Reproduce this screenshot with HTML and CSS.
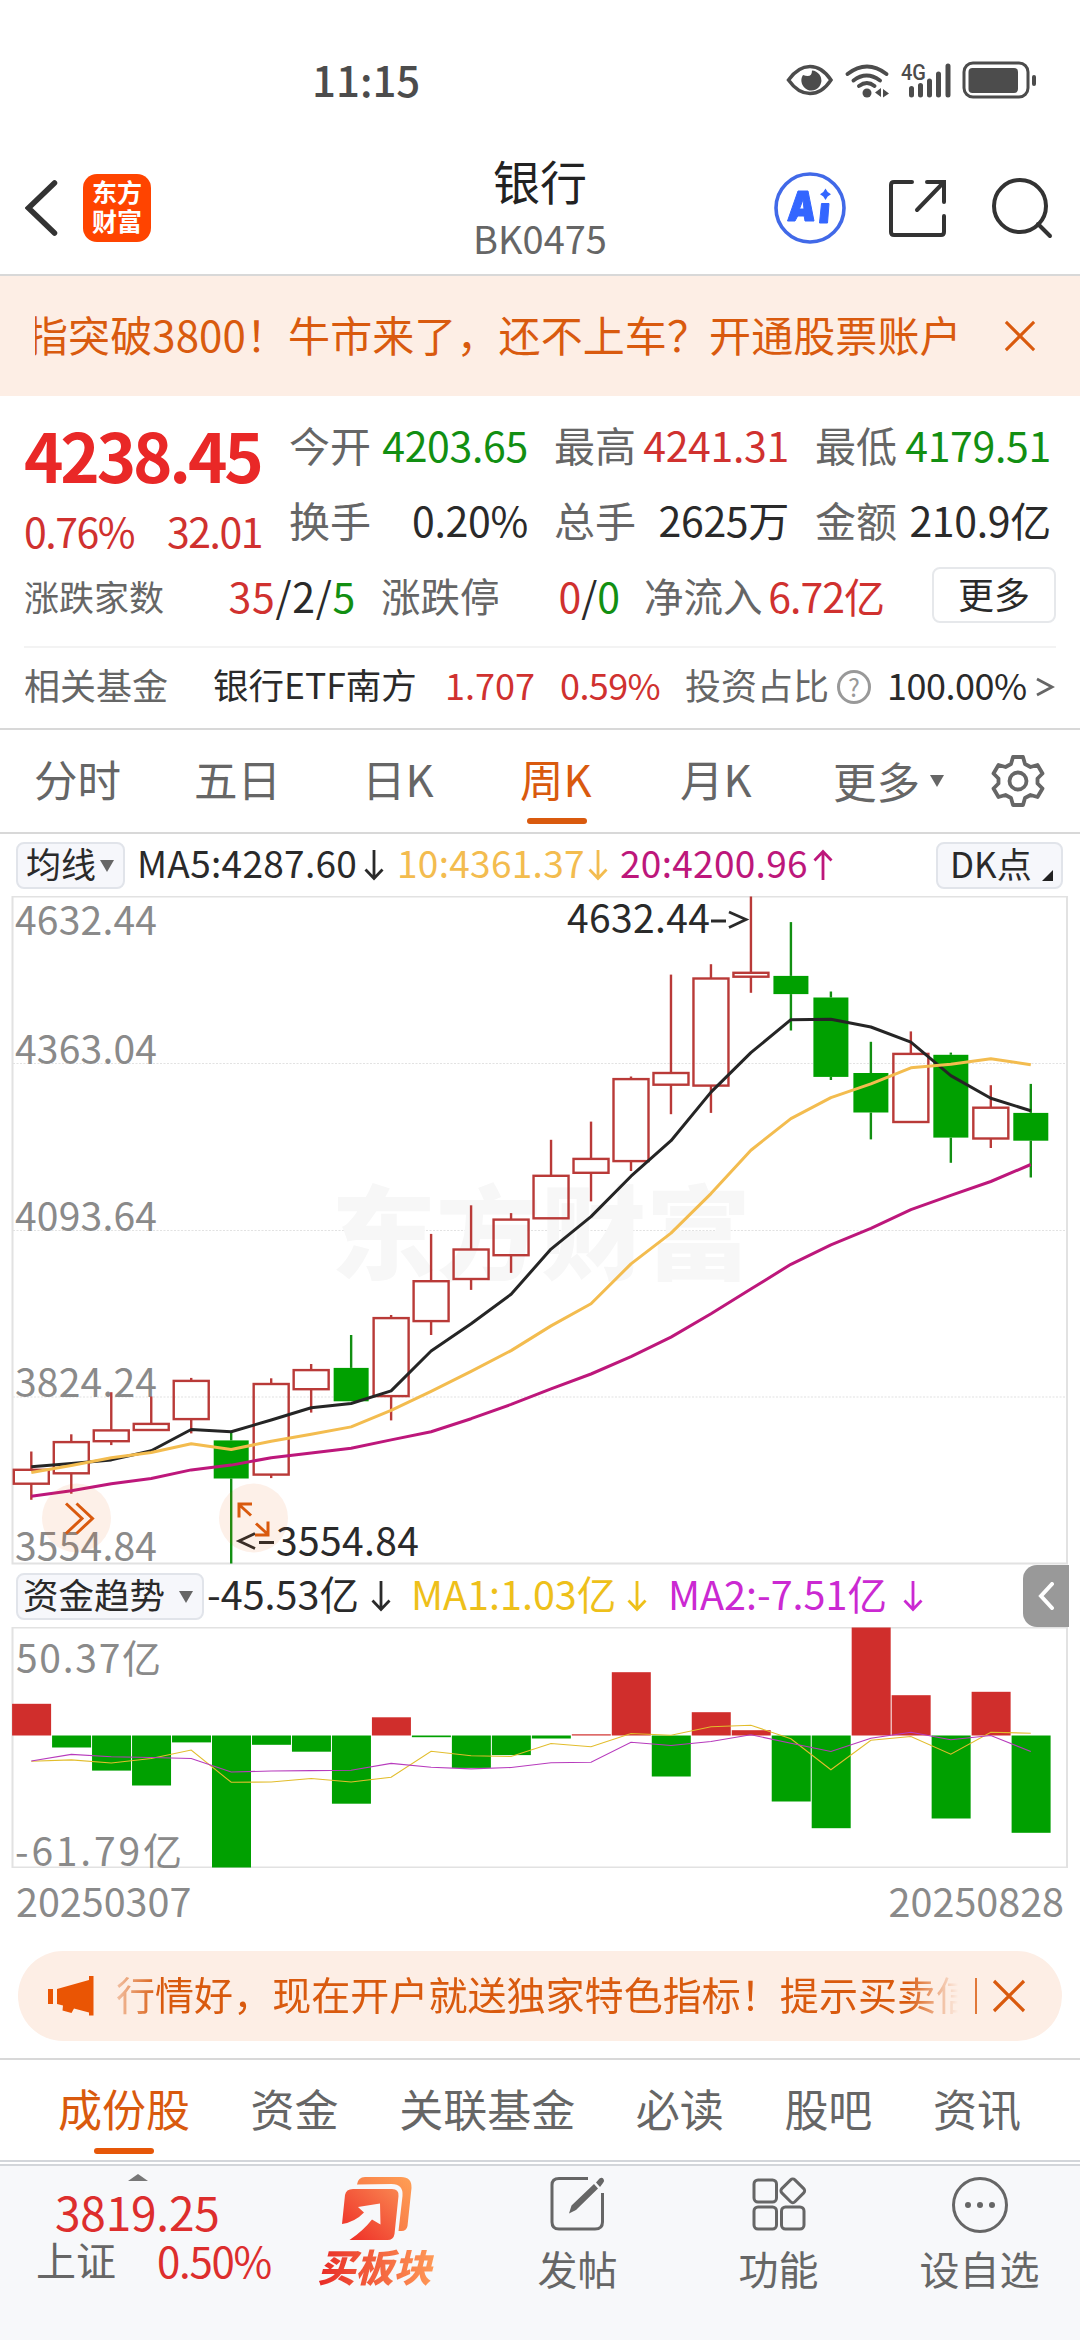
FILE: index.html
```html
<!DOCTYPE html>
<html lang="zh-CN">
<head>
  <meta charset="UTF-8" />
  <meta name="viewport" content="width=device-width, initial-scale=1.0"/>
  <title>银行 BK0475</title>
  <link rel="stylesheet" href="styles.css">
</head>
<body>

  <svg class="defs" width="0" height="0">
    <symbol id="arrow-down" viewBox="0 0 20 32">
      <path d="M10 1v28M1.500 20.500L10 29.500l8.500-9" fill="none" stroke="currentColor" stroke-width="2.800"/>
    </symbol>
    <symbol id="arrow-up" viewBox="0 0 20 32">
      <path d="M10 31V3M1.500 11.500L10 2.500l8.500 9" fill="none" stroke="currentColor" stroke-width="2.800"/>
    </symbol>
    <symbol id="close" viewBox="0 0 34 34">
      <path d="M2 2l30 30M32 2L2 32" fill="none" stroke="currentColor" stroke-width="3.200"/>
    </symbol>
  </svg>

  <div class="status-bar">
    <span class="clock">11:15</span>
    <svg class="status-icons" width="254" height="40" viewBox="786 60 254 40">
      <g fill="none" stroke="#4c4c4c">
        <path d="M788.500 80Q798 66.500 810 66.500T831 80Q822 93.500 810 93.500T788.500 80z" stroke-width="3.500"/>
        <path d="M847.500 74q19.500-15 39 0M853.500 80.500q13-10 26.500 0M859 86q8-6 15.500 0" stroke-width="3.800" stroke-linecap="round"/>
        <path d="M911.500 88.500v6.500M920.500 85.500v9.500M929.500 81v14M938.500 74v21M948 66v29" stroke-width="5" stroke-linecap="round"/>
        <rect x="964" y="63" width="64" height="34" rx="9" stroke-width="3"/>
      </g>
      <g fill="#4c4c4c">
        <path d="M803 75a10 10 0 1 0 9-4.500q0 8-9 4.500z"/>
        <circle cx="867" cy="93" r="4.500"/>
        <path d="M881 88v9l-6-4.500zM883 89l6 4.500-6 4z"/>
        <rect x="968.500" y="68" width="49.500" height="25" rx="4"/>
        <rect x="1032" y="75" width="4" height="11" rx="2"/>
        <text x="901" y="80" class="net-label" textLength="25" lengthAdjust="spacingAndGlyphs">4G</text>
      </g>
    </svg>
  </div>

  <header>
    <div class="header-left">
      <svg width="34" height="58" viewBox="0 0 34 58">
        <path d="M29.500 4L3.500 29l26 25" fill="none" stroke="#333" stroke-width="5.500" stroke-linecap="round"/>
      </svg>
      <div class="brand">东方<br>财富</div>
    </div>
    <div class="title">
      <h1>银行</h1>
      <p>BK0475</p>
    </div>
    <div class="header-right">
      <svg width="74" height="74" viewBox="0 0 74 74">
        <circle cx="37" cy="37" r="34" fill="none" stroke="#4169e8" stroke-width="3.600"/>
        <g fill="#3366ff" stroke="#3366ff" stroke-width="1" stroke-linejoin="round">
          <path fill-rule="evenodd" d="M25 20h10l6 30h-9l-.8-5h-6.500L22 50h-7.500zM30 28.500l-3.500 9.500h4.500z"/>
          <path d="M48.500 32.500h7.500l-1.500 19.500h-8z"/>
          <path stroke="none" d="M52.500 17.500l2.200 3.600 3.300 2.200-3.300 2.200-2.200 3.600-2.200-3.600-3.300-2.200 3.300-2.200z"/>
        </g>
      </svg>
      <svg class="share" width="60" height="60" viewBox="0 0 60 60">
        <path d="M24 3H6Q3 3 3 6v47q0 3 3 3h47q3 0 3-3V37M39 3h17v20M56 3L29 31" fill="none" stroke="#333" stroke-width="4" stroke-linecap="round"/>
      </svg>
      <svg class="search" width="62" height="62" viewBox="0 0 62 62">
        <circle cx="29" cy="29" r="26" fill="none" stroke="#333" stroke-width="4"/>
        <path d="M47 47l12 12" stroke="#333" stroke-width="4" stroke-linecap="round"/>
      </svg>
    </div>
  </header>

  <div class="banner">
    <div class="banner-text"><span>指突破3800！牛市来了，还不上车？开通股票账户</span></div>
    <svg class="banner-close" width="32" height="34" preserveAspectRatio="none"><use href="#close"/></svg>
  </div>

  <section class="quote">
    <div class="quote-main">
      <div class="price-box">
        <div class="price">4238.45</div>
        <div class="change"><span>0.76%</span><span>32.01</span></div>
      </div>
      <div class="stats">
        <div><label>今开</label><b class="green">4203.65</b></div>
        <div><label>最高</label><b class="red">4241.31</b></div>
        <div><label>最低</label><b class="green">4179.51</b></div>
        <div><label>换手</label><b>0.20%</b></div>
        <div><label>总手</label><b>2625万</b></div>
        <div><label>金额</label><b>210.9亿</b></div>
      </div>
    </div>
    <div class="quote-row">
      <div class="updown"><label>涨跌家数</label><b><i class="red">35</i>/2/<i class="green">5</i></b></div>
      <div class="limit"><label>涨跌停</label><b><i class="red">0</i>/<i class="green">0</i></b></div>
      <div class="inflow"><label>净流入</label><b class="red">6.72亿</b></div>
      <button class="more-btn">更多</button>
    </div>
    <div class="fund-row">
      <label>相关基金</label>
      <span class="fund-name">银行ETF南方</span>
      <span class="fund-price red">1.707</span>
      <span class="fund-pct red">0.59%</span>
      <label>投资占比</label>
      <span class="help">?</span>
      <span class="fund-ratio">100.00%</span>
      <svg width="20" height="22" viewBox="0 0 20 22"><path d="M2 3l15 8-15 8" fill="none" stroke="#666" stroke-width="2.800"/></svg>
    </div>
  </section>

  <nav class="period-tabs">
    <a class="p1">分时</a>
    <a class="p2">五日</a>
    <a class="p3">日K</a>
    <a class="p4 active">周K</a>
    <a class="p5">月K</a>
    <a class="p6">更多<i class="caret"></i></a>
    <svg class="gear" width="54" height="54" viewBox="0 0 54 54">
      <path d="M22 3h10l2 7 5.500 3 7-2 5 8.500-5 5v5l5 5-5 8.500-7-2-5.500 3-2 7H22l-2-7-5.500-3-7 2-5-8.500 5-5v-5l-5-5 5-8.500 7 2 5.500-3z" fill="none" stroke="#666" stroke-width="3.800" stroke-linejoin="round"/>
      <circle cx="27" cy="27" r="8.500" fill="none" stroke="#666" stroke-width="3.800"/>
    </svg>
  </nav>

  <div class="ma-row">
    <div class="chip chip-ma">均线<i class="caret"></i></div>
    <span class="ma ma5">MA5:4287.60</span><svg class="arrow" width="20" height="32"><use href="#arrow-down"/></svg>
    <span class="ma ma10">10:4361.37</span><svg class="arrow yellow" width="20" height="32"><use href="#arrow-down"/></svg>
    <span class="ma ma20">20:4200.96</span><svg class="arrow pink" width="20" height="32"><use href="#arrow-up"/></svg>
    <div class="chip chip-dk">DK点<i class="corner"></i></div>
  </div>

  <svg class="kline" id="kline" width="1080" height="669" viewBox="0 -0.500 1080 669">
    <g class="frame">
      <path d="M12.500 0H1067V667H12.500z"/>
    </g>
    <path class="grid" d="M13 167H1067M13 334H1067M13 500.500H1067"/>
    <text class="watermark" x="331" y="375" textLength="420" lengthAdjust="spacingAndGlyphs">东方财富</text>
    <g class="axis">
      <text x="15" y="38.500" textLength="142">4632.44</text>
      <text x="15" y="167" textLength="142">4363.04</text>
      <text x="15" y="334" textLength="142">4093.64</text>
      <text x="15" y="500.500" textLength="142">3824.24</text>
      <text x="15" y="664" textLength="142">3554.84</text>
    </g>
    <g id="candles"></g>
    <g class="marks">
      <text x="567" y="36" textLength="143">4632.44</text>
      <text x="276" y="659" textLength="143">3554.84</text>
      <path d="M711 24.500h15M729 15.500l17 7.500-17 8M255 637l-16 7.500 16 7.500M259 646h15"/>
    </g>
    <g class="float-btn">
      <circle cx="76.500" cy="621.500" r="34.500"/>
      <circle cx="253.500" cy="621.500" r="34.500"/>
      <path d="M66 607l16 15-16 15M76.500 607l16 15-16 15M239 621v-13.500h13M239 608l12 11M268 625v13.500h-13M268 638l-12-11"/>
    </g>
  </svg>

  <div class="trend-row">
    <div class="chip chip-trend">资金趋势<i class="caret"></i></div>
    <span class="tr tr0">-45.53亿</span><svg class="arrow" width="20" height="36"><use href="#arrow-down"/></svg>
    <span class="tr tr1">MA1:1.03亿</span><svg class="arrow" width="20" height="36"><use href="#arrow-down"/></svg>
    <span class="tr tr2">MA2:-7.51亿</span><svg class="arrow" width="20" height="36"><use href="#arrow-down"/></svg>
    <div class="side-btn">
      <svg width="16" height="28" viewBox="0 0 16 28"><path d="M14 2L3 14l11 12" fill="none" stroke="#fff" stroke-width="4" stroke-linecap="round"/></svg>
    </div>
  </div>

  <svg class="flow" id="flow" width="1080" height="241" viewBox="0 -0.500 1080 241">
    <g class="frame"><path d="M12.500 0H1067V240H12.500z"/></g>
    <g id="bars"></g>
    <g class="axis">
      <text x="16" y="45.500" textLength="145">50.37亿</text>
      <text x="15" y="238" textLength="167">-61.79亿</text>
    </g>
  </svg>
  <div class="dates"><span>20250307</span><span>20250828</span></div>

  <div class="pill">
    <svg class="horn" width="46" height="40" viewBox="0 0 46 40" fill="#ea5504">
      <path d="M0 13h5v15H0zM9 13L41 4V0h4.500v39.500H41V36.500l-15-4-2.500 4.500-9-2.500.5-5L9 28z"/>
    </svg>
    <div class="pill-text">行情好，现在开户就送独家特色指标！提示买卖信号</div>
    <i class="pill-line"></i>
    <svg class="pill-close" width="34" height="34"><use href="#close"/></svg>
  </div>

  <nav class="info-tabs">
    <a class="active">成份股</a>
    <a>资金</a>
    <a>关联基金</a>
    <a>必读</a>
    <a>股吧</a>
    <a>资讯</a>
  </nav>

  <footer>
    <div class="index-box">
      <i class="up-caret"></i>
      <div class="index-value">3819.25</div>
      <div class="index-line"><span>上证</span><span class="index-pct">0.50%</span></div>
    </div>
    <div class="item buy">
      <svg width="72" height="66" viewBox="0 0 72 66">
        <defs>
          <linearGradient id="g1" x1="0" y1="1" x2="1" y2="0"><stop offset="0" stop-color="#ee2a25"/><stop offset="1" stop-color="#f98550"/></linearGradient>
          <linearGradient id="g2" x1="0" y1="1" x2="1" y2="0"><stop offset="0" stop-color="#f5693f"/><stop offset="1" stop-color="#ff9f55"/></linearGradient>
        </defs>
        <path d="M16 8.500Q17 1 24 1h36q11 0 10.500 11l-4 38q-1 5-6 5h-3l4-35q1-12-11-12z" fill="url(#g2)"/>
        <path d="M4 19q1-6 8-6h39q7 0 6.500 7l-4 38q-1 6-7 6H8.500Q22 55 31 43.500l8.500 5-.5-21-22 3.500 6 5.500Q14 46 1 48z" fill="url(#g1)"/>
      </svg>
      <span>买板块</span>
    </div>
    <div class="item">
      <svg width="56" height="56" viewBox="0 0 56 56">
        <path d="M38 2.500H9Q2 2.500 2 9v37q0 7 7 7h36q7.500 0 7.500-7V17" fill="none" stroke="#666" stroke-width="3"/>
        <path d="M19 37.500l2.500-8L44 8l4 4.500L26 34zM46 6.500l3.500-4q2.500-1.500 4 .5t-.5 4L50 11z" fill="#666"/>
      </svg>
      <span>发帖</span>
    </div>
    <div class="item">
      <svg width="56" height="56" viewBox="0 0 56 56" fill="none" stroke="#666" stroke-width="3">
        <rect x="3" y="4" width="22.500" height="22" rx="4"/>
        <rect x="3" y="31" width="22.500" height="22" rx="4"/>
        <rect x="30.500" y="31" width="22.500" height="22" rx="4"/>
        <rect x="32.500" y="5.500" width="18.500" height="18.500" rx="3" transform="rotate(45 41.700 14.800)"/>
      </svg>
      <span>功能</span>
    </div>
    <div class="item">
      <svg width="58" height="58" viewBox="0 0 58 58">
        <circle cx="29" cy="29" r="26.500" fill="none" stroke="#666" stroke-width="3"/>
        <g fill="#666"><circle cx="17" cy="29" r="3"/><circle cx="29" cy="29" r="3"/><circle cx="41" cy="29" r="3"/></g>
      </svg>
      <span>设自选</span>
    </div>
  </footer>

  <script src="script.js"></script>
</body>
</html>
```
FILE: styles.css
```css
* { box-sizing: border-box; }

body {
  font-family: 'Noto Sans CJK SC', 'Noto Sans', sans-serif;
  margin: 0;
  width: 1080px;
  background: #fff;
  color: #2a2a2a;
  line-height: 1;
}

h1, p { margin: 0; font-weight: normal; }
b, i { font-weight: normal; font-style: normal; }
svg { display: block; flex: none; }
.defs { position: absolute; }

.red { color: #d0312f; }
.green { color: #128f12; }

.caret {
  border: 7px solid transparent;
  border-top: 12px solid #666;
  border-bottom: 0;
}

/* status bar */
.status-bar {
  height: 110px;
  display: flex;
  justify-content: space-between;
  padding: 60px 40px 0 312px;
}

.clock {
  font-size: 42px;
  font-weight: 500;
  color: #4c4c4c;
  margin-top: -2px;
}

.net-label {
  font-family: Roboto, sans-serif;
  font-size: 22px;
  font-weight: 500;
}

/* header */
header {
  height: 166px;
  border-bottom: 2px solid #d8d8d8;
  display: grid;
  grid-template-columns: 1fr auto 1fr;
}

.header-left {
  display: flex;
  align-items: center;
  padding: 32px 0 0 25px;
  height: 164px;
  gap: 24px;
}

.brand {
  width: 68px;
  height: 68px;
  border-radius: 14px;
  background: #ff4400;
  color: #fff;
  font-weight: bold;
  font-size: 25px;
  line-height: 29px;
  text-align: center;
  padding-top: 3px;
}

.title { text-align: center; padding-top: 46px; }
.title h1 { font-size: 47px; color: #222; }
.title p { font-size: 38px; color: #666; margin-top: 16px; }

.header-right {
  display: flex;
  justify-content: flex-end;
  padding: 61px 27px 0 0;
}

.share { margin: 8px 0 0 41px; }
.search { margin: 6px 0 0 43px; }

/* promo banner */
.banner {
  height: 120px;
  background: #fdeee5;
  color: #d95a0e;
  display: flex;
  align-items: center;
  padding: 0 44px 4px 35px;
  justify-content: space-between;
}

.banner-text {
  width: 926px;
  overflow: hidden;
  white-space: nowrap;
  font-size: 42px;
  line-height: 56px;
  letter-spacing: 0.1px;
}

.banner-text span { margin-left: -9px; }
.banner-close { margin-top: 4px; }

/* quote */
.quote {
  height: 334px;
  border-bottom: 2px solid #d8d8d8;
  padding: 0 24px;
}

.quote-main { display: flex; height: 164px; }

.price-box { width: 266px; padding-top: 24px; }

.price {
  font-size: 67px;
  font-weight: bold;
  color: #e92827;
  letter-spacing: -3.2px;
}

.change {
  display: flex;
  justify-content: space-between;
  font-size: 41px;
  color: #d0312f;
  margin-top: 23px;
  padding: 0 28px 0 0;
  letter-spacing: -1.5px;
}

.stats {
  flex: 1;
  display: grid;
  grid-template-columns: 239px 235px 236px;
  column-gap: 26px;
  grid-template-rows: 75px 75px;
  padding-top: 11px;
  margin-left: -1px;
}

.stats div { display: flex; justify-content: space-between; align-items: center; }

label { color: #666; }
.stats label { font-size: 41px; }
.stats b { font-size: 41px; letter-spacing: -0.3px; white-space: nowrap; }

.quote-row {
  height: 88px;
  border-bottom: 2px solid #f3f3f3;
  display: flex;
  align-items: center;
  padding-bottom: 16px;
}

.quote-row div { display: flex; justify-content: space-between; align-items: center; }
.quote-row b { font-size: 41px; }
.updown { width: 332px; }
.updown label { font-size: 35px; }
.updown b { letter-spacing: 0.7px; }
.limit { width: 239px; margin-left: 25px; }
.limit label, .inflow label { font-size: 39.5px; }
.inflow { width: 240px; margin-left: 24px; }
.inflow b { letter-spacing: -1px; }

.more-btn {
  width: 124px;
  height: 56px;
  margin-left: auto;
  border: 2px solid #e6e8eb;
  border-radius: 8px;
  background: #fff;
  font: 36px/1 'Noto Sans CJK SC', sans-serif;
  color: #2a2a2a;
  padding: 0 0 5px;
}

.fund-row {
  height: 72px;
  display: flex;
  align-items: center;
  font-size: 36px;
  white-space: nowrap;
}

.fund-name { margin-left: 45px; width: 232px; font-size: 35.5px; }
.fund-price { width: 115px; }
.fund-pct { width: 125px; letter-spacing: -0.6px; }

.help {
  width: 34px;
  height: 34px;
  margin: 5px 16px 0 8px;
  border: 3px solid #999;
  border-radius: 50%;
  color: #999;
  font-size: 25px;
  line-height: 26px;
  text-align: center;
}

.fund-ratio { width: 148px; letter-spacing: -0.5px; }
.fund-row svg { margin-top: 6px; }

/* period tabs */
.period-tabs {
  height: 104px;
  border-bottom: 2px solid #d8d8d8;
  display: flex;
  align-items: center;
  font-size: 43.5px;
  color: #666;
  padding: 0 34px;
}

.period-tabs a {
  height: 104px;
  line-height: 100px;
  white-space: nowrap;
}

.p1 { width: 160px; }
.p2 { width: 168px; }
.p3 { width: 158px; }
.p4 { width: 160px; }
.p5 { width: 153px; }
.p6 { display: flex; align-items: center; gap: 10px; width: 158px; }

.active { color: #d95a0e; }

.p4::after {
  content: "";
  display: block;
  width: 60px;
  height: 6px;
  border-radius: 3px;
  background: #d95a0e;
  margin: -11px 0 0 7px;
}

/* indicator rows */
.ma-row, .trend-row {
  display: flex;
  align-items: center;
  white-space: nowrap;
}

.ma-row { height: 62px; padding: 0 17px 0 16px; font-size: 37px; }

.chip {
  height: 47px;
  border: 2px solid #e1e4ea;
  border-radius: 8px;
  background: #f6f7fb;
  font-size: 35px;
  display: flex;
  align-items: center;
  padding-bottom: 5px;
}

.chip .caret { margin-top: 6px; }
.chip-ma { width: 109px; padding-left: 8px; gap: 4px; }
.chip-dk { width: 127px; margin-left: auto; padding-left: 12px; gap: 10px; font-size: 35px; }

.corner {
  border-left: 11px solid transparent;
  border-bottom: 11px solid #222;
  margin-top: 26px;
}

.ma { margin-bottom: 5px; letter-spacing: 0.3px; }
.ma5 { margin-left: 12px; width: 227px; }
.ma10 { margin-left: 13px; width: 191px; color: #f3bc4f; }
.ma20 { margin-left: 12px; width: 193px; color: #bd177b; }
.yellow { color: #f3bc4f; }
.pink { color: #bd177b; }

.trend-row { height: 62px; padding-left: 16px; font-size: 39.5px; }
.chip-trend { width: 188px; padding-left: 5px; gap: 14px; font-size: 35.5px; }
.tr { margin-bottom: 6px; }
.tr0 { margin-left: 3px; width: 164px; }
.tr1 { margin-left: 20px; width: 216px; color: #eec01a; }
.tr1 + .arrow { color: #eec01a; }
.tr2 { margin-left: 21px; width: 235px; color: #cb29d2; }
.tr2 + .arrow { color: #cb29d2; }

.side-btn {
  width: 46px;
  height: 62px;
  margin: 0 11px 0 auto;
  border-radius: 14px 0 0 14px;
  background: #999;
  display: flex;
  align-items: center;
  justify-content: center;
}

/* charts */
.frame path { fill: none; stroke: #e2e2e2; stroke-width: 2; }
.grid { stroke: #e2e2e2; stroke-width: 1.2; stroke-dasharray: 2 1.5; }
.watermark { font-size: 102px; font-weight: 900; fill: #f7f7f7; }
.axis { font-size: 39px; fill: #8a8a8a; }
.marks { font-size: 39px; fill: #2a2a2a; }
.marks path { fill: none; stroke: #2a2a2a; stroke-width: 2.8; }

.up rect { fill: none; stroke: #b93a38; stroke-width: 2.4; }
.up line { stroke: #b93a38; stroke-width: 2.4; }
.down rect { fill: #00a000; }
.down line { stroke: #128f12; stroke-width: 2.4; }

.line { fill: none; stroke-width: 3; stroke-linejoin: round; }
.line.black { stroke: #252525; }
.line.gold { stroke: #f3bc4f; }
.line.magenta { stroke: #bd177b; }

.float-btn circle { fill: #ea5504; fill-opacity: 0.09; }
.float-btn path { fill: none; stroke: #d95a0e; stroke-width: 3; }

.bar-up { fill: #d02e2c; }
.bar-down { fill: #00a000; }
.thin { fill: none; stroke-width: 1.1; }
.thin.gold { stroke: #e2bd2c; }
.thin.purple { stroke: #b73bbd; }

.dates {
  height: 83px;
  display: flex;
  justify-content: space-between;
  padding: 12px 16px 0 16px;
  font-size: 39.5px;
  color: #8a8a8a;
}

/* promo pill */
.pill {
  width: 1044px;
  height: 90px;
  margin: 0 auto;
  border-radius: 45px;
  background: #fdeee5;
  color: #d95a0e;
  display: flex;
  align-items: center;
  padding-left: 30px;
}

.pill-text {
  width: 842px;
  margin: 0 0 6px 22px;
  overflow: hidden;
  white-space: nowrap;
  font-size: 39px;
  line-height: 56px;
  letter-spacing: 0.05px;
  -webkit-mask-image: linear-gradient(90deg, rgba(0,0,0,.3), #000 5%, #000 94%, transparent);
  mask-image: linear-gradient(90deg, rgba(0,0,0,.3), #000 5%, #000 94%, transparent);
}

.pill-line { width: 2px; height: 36px; background: #d95a0e; margin: 0 15px 0 17px; opacity: .8; }

/* info tabs */
.info-tabs {
  height: 108px;
  margin-top: 17px;
  border-top: 2px solid #d8d8d8;
  border-bottom: 6px double #d3d6da;
  display: flex;
  justify-content: space-between;
  padding: 0 59px 0 58px;
  font-size: 44px;
  color: #666;
}

.info-tabs a { line-height: 97px; }
.info-tabs .active { color: #d95a0e; }

.info-tabs .active::after {
  content: "";
  display: block;
  width: 60px;
  height: 6px;
  border-radius: 3px;
  background: #e65708;
  margin: -9px 0 0 36px;
}

/* bottom bar */
footer {
  height: 174px;
  background: #f7f8fa;
  display: flex;
}

.index-box { width: 276px; padding: 8px 0 0 36px; }

.up-caret {
  display: block;
  width: 20px;
  margin-left: 92px;
  border: 10px solid transparent;
  border-bottom: 7px solid #777;
  border-top: 0;
}

.index-value { font-size: 46px; color: #dd2e2d; margin: 7px 0 0 19px; letter-spacing: -0.2px; }

.index-line {
  display: flex;
  font-size: 40px;
  color: #666;
  margin-top: 5px;
}

.index-pct { color: #dd2e2d; font-size: 42px; margin-left: 41px; letter-spacing: -1.3px; }

.item {
  width: 201px;
  display: flex;
  flex-direction: column;
  align-items: center;
  justify-content: space-between;
  height: 122px;
  padding-top: 10px;
  font-size: 40px;
  color: #666;
}

.buy span {
  font-size: 38px;
  font-weight: 900;
  font-style: italic;
  padding: 0 4px 0 0;
  line-height: 44px;
  background: linear-gradient(90deg, #e82a26, #ff9b57);
  -webkit-background-clip: text;
  background-clip: text;
  color: transparent;
}
```
FILE: script.js
```js
const STEP = 39.98;
const FIRST = 31.3;
const BASE = 108;

// [high, top, bottom, low, falling]
const candles = [
  [555, 573.3, 587.2, 603.3], [537.8, 545.6, 576.8, 597.2], [495.7, 533.9, 544.7, 548.6],
  [500, 527.4, 533.5, 533.5], [481.4, 484.4, 522.6, 536.9], [534.3, 543.9, 582, 667, 1],
  [481.8, 487.5, 578.1, 581.6], [467.5, 473.6, 492.7, 516.1], [438.5, 471.4, 504.8, 504.8, 1],
  [418.5, 421.6, 499.6, 523.9], [337.4, 384.7, 424.6, 438.5], [308.8, 353, 382.5, 393.4],
  [316.6, 323.1, 358.7, 376.4], [243.3, 279.3, 321.8, 321.8], [225.1, 262.4, 276.3, 304.9],
  [180, 182.6, 264.6, 274.5], [78.1, 176.5, 188.2, 217.7], [67.7, 82, 189.1, 216.4],
  [0, 76.3, 80.2, 96.3], [25.6, 79.4, 97.6, 134, 1], [95, 101, 180.4, 183.5, 1],
  [145.3, 176.5, 216, 242.9, 1], [134.9, 157.4, 225.5, 225.5], [156.1, 158.3, 241.1, 266.3, 1],
  [188.7, 211.2, 242, 251.5], [187.4, 216.4, 244.2, 281, 1]
];

const ma5 = [570.3, 566.9, 563.4, 554.3, 533, 535.2, 523.5, 511.3, 507, 494.4, 454.5, 427.2, 397.7,
  352.6, 320.1, 279.7, 244.2, 195.6, 156.1, 123.2, 122.7, 130.5, 145.7, 179.1, 201.7, 214.2];
const ma10 = [576, 569, 561.2, 556, 547.3, 553, 544.7, 537.8, 530.4, 513.9, 494.9, 474.9, 454.1,
  429.4, 407.2, 367.4, 336.6, 297.1, 253.7, 222.1, 201.2, 187.4, 171.3, 167.8, 162.2, 168.3];
const ma20 = [599.8, 594.2, 587.2, 582, 573.4, 568.6, 561.2, 556.4, 551.7, 543.4, 535.2, 522.2, 507.9,
  492.3, 477.5, 460.2, 440.6, 417.2, 392.5, 367.8, 348.3, 331.8, 313.1, 298.8, 285, 268];

// fund flow, positive goes up from the zero line
const flow = [31.7, -12, -35.1, -50, -6.9, -132, -9.3, -16.2, -68.2, 18.2, -1.7, -32.4, -19.6,
  -3, 1.2, 63.3, -41, 23.3, 5.3, -66, -92.7, 108, 40.3, -83, 43.7, -97.3];
const flowMa1 = [25.8, 24.4, 27.5, 23, 14.5, 46.8, 46.5, 43, 46.5, 41.7, 15.8, 20.3, 21,
  8, 11.3, -2, -0.3, -8.7, -10.3, 3.3, 34.3, 4.7, 1, 18.7, -3.3, -2.3];
const flowMa2 = [25.5, 18.9, 21.3, 22, 23, 36.5, 35.5, 35.1, 34.8, 27.9, 31.7, 33.4, 32,
  27.3, 26.7, 6.7, 10, 6, -0.7, 7.7, 16, 2.7, -3.3, 4.3, 0, 16];

function xAt(i) {
  return FIRST + i * STEP;
}

function polyline(values, cls, offset = 0) {
  const points = values.map((v, i) => `${xAt(i).toFixed(1)},${(v + offset).toFixed(1)}`).join(" ");
  return `<polyline class="${cls}" points="${points}"/>`;
}

let html = "";
candles.forEach(([high, top, bottom, low, falling], i) => {
  const x = xAt(i);
  html += `<g class="${falling ? "down" : "up"}">
    <line x1="${x}" x2="${x}" y1="${high}" y2="${top}"/>
    <line x1="${x}" x2="${x}" y1="${bottom}" y2="${low}"/>
    <rect x="${x - 17.5}" y="${top}" width="35" height="${bottom - top}"/>
  </g>`;
});
html += polyline(ma5, "line black") + polyline(ma10, "line gold") + polyline(ma20, "line magenta");
document.getElementById("candles").innerHTML = html;

html = "";
flow.forEach((v, i) => {
  const y = v > 0 ? BASE - v : BASE;
  html += `<rect class="${v > 0 ? "bar-up" : "bar-down"}" x="${xAt(i) - 19.2}" y="${y}" width="39" height="${Math.abs(v)}"/>`;
});
html += polyline(flowMa1, "thin gold", BASE) + polyline(flowMa2, "thin purple", BASE);
document.getElementById("bars").innerHTML = html;
```
